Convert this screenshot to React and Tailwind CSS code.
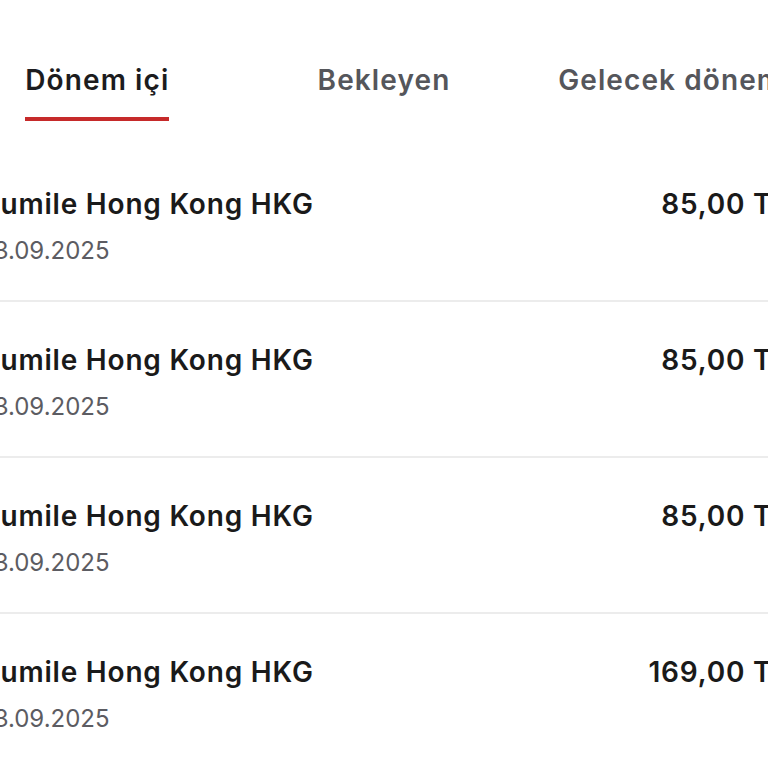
const tabs = ['Dönem içi', 'Bekleyen', 'Gelecek dönem'];

const items = [
  { title: 'Cumile Hong Kong HKG', date: '23.09.2025', amount: '85,00 TL' },
  { title: 'Cumile Hong Kong HKG', date: '23.09.2025', amount: '85,00 TL' },
  { title: 'Cumile Hong Kong HKG', date: '23.09.2025', amount: '85,00 TL' },
  { title: 'Cumile Hong Kong HKG', date: '23.09.2025', amount: '169,00 TL' },
];

export default function App() {
  return (
    <div
      className="w-[768px] h-[768px] overflow-hidden bg-white"
      style={{ fontFamily: 'Inter, "Noto Sans", sans-serif' }}
    >
      <div className="w-[860px] -ml-[46px]">
        {/* Tabs */}
        <div className="grid grid-cols-3 pt-[62px]">
          {tabs.map((t, i) => (
            <div key={t} className="flex justify-center">
              <div className="flex flex-col items-stretch">
                <span
                  className={
                    'text-[28px] leading-[36px] font-semibold tracking-[1.1px] whitespace-nowrap ' +
                    (i === 0 ? 'text-[#1c1c1e]' : 'text-[#55565b]')
                  }
                >
                  {t}
                </span>
                <div className={'mt-[19px] h-[4px] ' + (i === 0 ? 'bg-[#c62a2a]' : 'bg-transparent')} />
              </div>
            </div>
          ))}
        </div>

        {/* List */}
        <div className="mt-[25px]">
          {items.map((it, i) => (
            <div key={i} className="flex justify-between px-[25px] pt-[40px] pb-[33px] border-b-2 border-[#ececec]">
              <div className="flex flex-col gap-[13px]">
                <span className="text-[28px] leading-[36px] font-semibold tracking-[0.8px] text-[#1a1a1a] whitespace-nowrap">{it.title}</span>
                <span className="text-[24px] leading-[32px] text-[#5c5c62] whitespace-nowrap">{it.date}</span>
              </div>
              <span className="text-[28px] leading-[36px] font-semibold tracking-[0.8px] text-[#1a1a1a] whitespace-nowrap">{it.amount}</span>
            </div>
          ))}
        </div>
      </div>
    </div>
  );
}
